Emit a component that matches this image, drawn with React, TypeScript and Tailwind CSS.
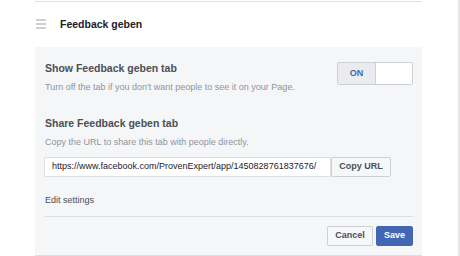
import React from "react";

export default function App() {
  return (
    <div className="w-[460px] h-[256px] bg-white relative overflow-hidden" style={{ fontFamily: '"Liberation Sans", Arial, sans-serif' }}>
      <div className="absolute left-[458px] top-0 h-[256px] w-[2px] bg-[#e6e6e6]" />
      <div className="ml-[35px] w-[387px] border-t border-[#dddfe2] mt-[1px]">
        <div className="h-[45px] flex items-start">
          <div className="flex flex-col gap-[2px] w-[10px] ml-[1px] mt-[17px]">
            <div className="h-[2px] bg-[#ccd0d5]" />
            <div className="h-[2px] bg-[#ccd0d5]" />
            <div className="h-[2px] bg-[#ccd0d5]" />
          </div>
          <div className="ml-[14px] mt-[16px] text-[10.5px] leading-[12px] font-bold text-[#1d2129]">Feedback geben</div>
        </div>
        <div className="bg-[#f5f6f7] h-[209px] border-b border-[#dddfe2] px-[9px]">
          <div className="flex items-start justify-between pt-[15px]">
            <div className="pl-[1px]">
              <div className="text-[10.5px] font-bold text-[#4b4f56] leading-[12px]">Show Feedback geben tab</div>
              <div className="text-[9px] text-[#90949c] leading-[12px] mt-[7px]">Turn off the tab if you don't want people to see it on your Page.</div>
            </div>
            <div className="flex h-[23px] w-[76px] border border-[#ced0d4] rounded-[2px] overflow-hidden">
              <div className="w-[38px] bg-[#e9ebee] border-r border-[#ced0d4] flex items-center justify-center text-[9px] font-bold text-[#4267b2]">ON</div>
              <div className="flex-1 bg-white" />
            </div>
          </div>
          <div className="pl-[1px] mt-[24px] text-[10.5px] font-bold text-[#4b4f56] leading-[12px]">Share Feedback geben tab</div>
          <div className="pl-[1px] text-[9px] text-[#90949c] leading-[12px] mt-[7px]">Copy the URL to share this tab with people directly.</div>
          <div className="flex mt-[9px]">
            <div className="w-[287px] h-[20px] bg-white border border-[#dddfe2] flex items-center pl-[7px] text-[9px] text-[#1d2129]">https://www.facebook.com/ProvenExpert/app/1450828761837676/</div>
            <div className="w-[60px] h-[20px] bg-[#f6f7f9] border border-[#ced0d4] rounded-[2px] flex items-center justify-center text-[9px] font-bold text-[#4b4f56]">Copy URL</div>
          </div>
          <div className="pl-[1px] mt-[17px] text-[9px] text-[#4b4f56] leading-[12px]">Edit settings</div>
          <div className="mt-[10px] border-t border-[#dddfe2]" />
          <div className="flex justify-end gap-[3px] mt-[9px]">
            <div className="w-[46px] h-[20px] bg-[#f6f7f9] border border-[#ced0d4] rounded-[2px] flex items-center justify-center text-[9px] font-bold text-[#4b4f56]">Cancel</div>
            <div className="w-[37px] h-[20px] bg-[#4267b2] border border-[#4267b2] rounded-[2px] flex items-center justify-center text-[9px] font-bold text-white">Save</div>
          </div>
        </div>
      </div>
    </div>
  );
}
